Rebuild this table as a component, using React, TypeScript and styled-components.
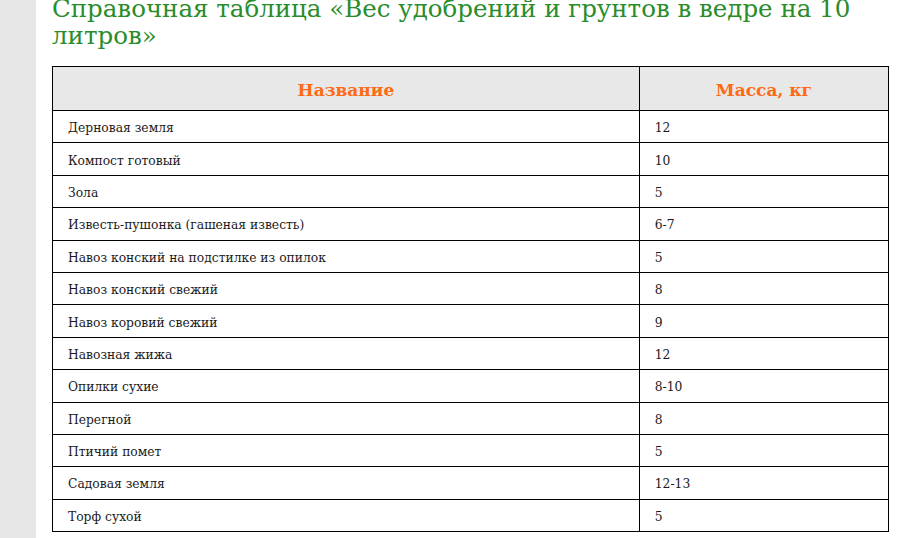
import React from 'react';
import styled, {createGlobalStyle} from 'styled-components';

const GlobalStyle = createGlobalStyle`
  html, body {
    margin: 0;
    padding: 0;
    background: #FFFFFF;
    overflow: hidden;
  }
`

const Page = styled.div`
  display: flex;
  height: 538px;
  overflow: hidden;
`

const Sidebar = styled.div`
  width: 36px;
  flex-shrink: 0;
  background-color: #E6E6E6;
`

const Content = styled.div`
  flex: 1;
  padding: 0 14px 0 16px;
`

const Title = styled.h2`
  margin: -5px 0 0 0;
  font-family: "DejaVu Serif", serif;
  font-weight: normal;
  font-size: 24.5px;
  line-height: 27px;
  color: #2A8C2A;
`

const Table = styled.table`
  margin-top: 17px;
  width: 837px;
  border-collapse: collapse;
  font-family: "DejaVu Serif", serif;
`

const HeadCell = styled.th<{ $width: number }>`
  width: ${p => p.$width}px;
  height: 41px;
  padding: 2px 0 0 0;
  background-color: #E8E8E8;
  border: 1px solid #000000;
  font-size: 17px;
  font-weight: bold;
  color: #FF6A13;
  text-align: center;
  vertical-align: middle;
`

const Cell = styled.td`
  height: 28.4px;
  padding: 3px 15px 0 15px;
  border: 1px solid #000000;
  font-size: 12.3px;
  color: #1A1A1A;
  vertical-align: middle;
`

const rows: [string, string][] = [
    ['Дерновая земля', '12'],
    ['Компост готовый', '10'],
    ['Зола', '5'],
    ['Известь-пушонка (гашеная известь)', '6-7'],
    ['Навоз конский на подстилке из опилок', '5'],
    ['Навоз конский свежий', '8'],
    ['Навоз коровий свежий', '9'],
    ['Навозная жижа', '12'],
    ['Опилки сухие', '8-10'],
    ['Перегной', '8'],
    ['Птичий помет', '5'],
    ['Садовая земля', '12-13'],
    ['Торф сухой', '5'],
]

const App = () => {
    return (
        <>
            <GlobalStyle/>
            <Page>
                <Sidebar/>
                <Content>
                    <Title>Справочная таблица «Вес удобрений и грунтов в ведре на 10 литров»</Title>
                    <Table>
                        <thead>
                        <tr>
                            <HeadCell $width={588}>Название</HeadCell>
                            <HeadCell $width={249}>Масса, кг</HeadCell>
                        </tr>
                        </thead>
                        <tbody>
                        {rows.map(([name, mass]) => (
                            <tr key={name}>
                                <Cell>{name}</Cell>
                                <Cell>{mass}</Cell>
                            </tr>
                        ))}
                        </tbody>
                    </Table>
                </Content>
            </Page>
        </>
    );
};

export default App;
